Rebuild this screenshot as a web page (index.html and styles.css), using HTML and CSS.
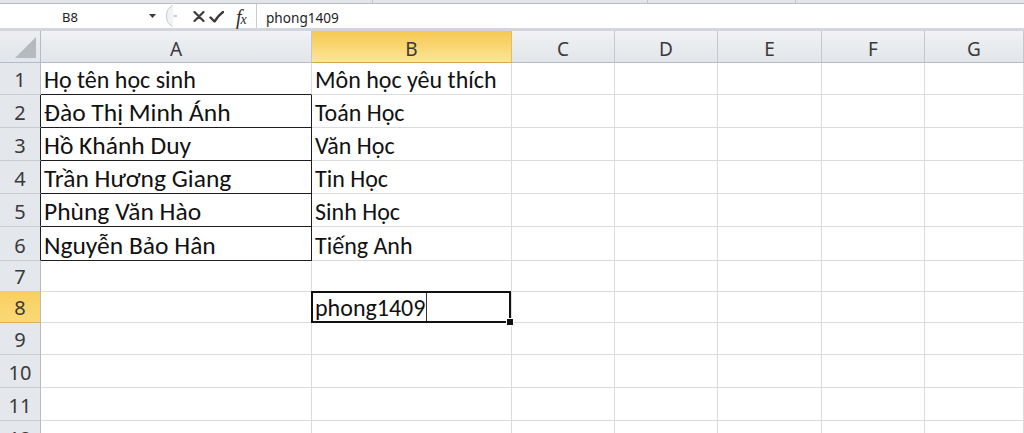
FILE: index.html
```html
<!DOCTYPE html>
<html lang="vi">
<head>
<meta charset="utf-8">
<title>Excel</title>
<link rel="stylesheet" href="styles.css">
</head>
<body>
<div class="app">
  <div class="topband">
    <span class="seg seg1"></span><span class="seg seg2"></span><span class="seg seg3"></span><span class="seg seg4"></span>
  </div>
  <div class="fbar">
    <div class="namebox">
      <span class="nb-text">B8</span>
      <svg class="nb-arrow" width="7" height="4" viewBox="0 0 7 4"><path d="M0 0H7L3.5 4Z" fill="#3a3a3a"/></svg>
    </div>
    <div class="tools">
      <svg class="grip" width="13" height="24" viewBox="0 0 13 24"><path d="M8 1.5C3.5 3 1.5 7 1.5 12S3.5 21 8 22.5" fill="#f1f2f4" stroke="#c7cbd1" stroke-width="1"/><path d="M8.5 12H12" stroke="#a9adb3" stroke-width="1.2"/></svg>
      <svg class="ic-x" width="12" height="11" viewBox="0 0 12 11"><path d="M1.5 1C4 3.5 8 7.5 10.5 10M10.5 1C8 3.5 4 7.5 1.5 10" stroke="#3d3d3d" stroke-width="2.2" stroke-linecap="round" fill="none"/></svg>
      <svg class="ic-ok" width="15" height="12" viewBox="0 0 15 12"><path d="M1.5 6.5L5.5 10.5C8 6.5 10.5 3.5 14 1" stroke="#3a3a3a" stroke-width="2.4" stroke-linecap="round" stroke-linejoin="round" fill="none"/></svg>
      <span class="fx"><i>f</i><i class="fx-x">x</i></span>
    </div>
    <div class="finput">phong1409</div>
  </div>
  <div class="sheet">
    <div class="corner"><svg width="21" height="21" viewBox="0 0 21 21"><path d="M21 0V21H0Z" fill="#b5babf"/></svg></div>
    <div class="ch">A</div><div class="ch sel">B</div><div class="ch">C</div><div class="ch">D</div><div class="ch">E</div><div class="ch">F</div><div class="ch">G</div>

    <div class="rh">1</div><div class="c bb">Họ tên học sinh</div><div class="c">Môn học yêu thích</div><div class="c"></div><div class="c"></div><div class="c"></div><div class="c"></div><div class="c"></div>

    <div class="rh dk">2</div><div class="c bx big">Đào Thị Minh Ánh</div><div class="c">Toán Học</div><div class="c"></div><div class="c"></div><div class="c"></div><div class="c"></div><div class="c"></div>

    <div class="rh dk">3</div><div class="c bx big">Hồ Khánh Duy</div><div class="c">Văn Học</div><div class="c"></div><div class="c"></div><div class="c"></div><div class="c"></div><div class="c"></div>

    <div class="rh dk">4</div><div class="c bx big">Trần Hương Giang</div><div class="c">Tin Học</div><div class="c"></div><div class="c"></div><div class="c"></div><div class="c"></div><div class="c"></div>

    <div class="rh dk">5</div><div class="c bx big">Phùng Văn Hào</div><div class="c">Sinh Học</div><div class="c"></div><div class="c"></div><div class="c"></div><div class="c"></div><div class="c"></div>

    <div class="rh dk">6</div><div class="c bx big">Nguyễn Bảo Hân</div><div class="c">Tiếng Anh</div><div class="c"></div><div class="c"></div><div class="c"></div><div class="c"></div><div class="c"></div>

    <div class="rh">7</div><div class="c"></div><div class="c"></div><div class="c"></div><div class="c"></div><div class="c"></div><div class="c"></div><div class="c"></div>

    <div class="rh sel">8</div><div class="c"></div><div class="c cur"><span>phong1409</span><span class="caret"></span></div><div class="c"></div><div class="c"></div><div class="c"></div><div class="c"></div><div class="c"></div>

    <div class="rh">9</div><div class="c"></div><div class="c"></div><div class="c"></div><div class="c"></div><div class="c"></div><div class="c"></div><div class="c"></div>

    <div class="rh">10</div><div class="c"></div><div class="c"></div><div class="c"></div><div class="c"></div><div class="c"></div><div class="c"></div><div class="c"></div>

    <div class="rh">11</div><div class="c"></div><div class="c"></div><div class="c"></div><div class="c"></div><div class="c"></div><div class="c"></div><div class="c"></div>

    <div class="rh">12</div><div class="c"></div><div class="c"></div><div class="c"></div><div class="c"></div><div class="c"></div><div class="c"></div><div class="c"></div>
  </div>
</div>
</body>
</html>
```
FILE: styles.css
```css
* { box-sizing: border-box; }

html, body {
  margin: 0;
  background: #ffffff;
  overflow: hidden;
}

body {
  font-family: "Noto Sans", "Liberation Sans", sans-serif;
  color: #222;
}

.app {
  width: 1024px;
  height: 433px;
  overflow: hidden;
}

/* thin strip left of the ribbon */
.topband {
  display: flex;
  height: 4px;
  background: #e1e4e8;
  border-bottom: 1px solid #b9bec6;
}
.seg { border-right: 1px solid #c3c8cf; height: 100%; }
.seg1 { width: 373px; }
.seg2 { width: 275px; }
.seg3 { width: 148px; }
.seg4 { flex: 1; border-right: 0; }

/* formula bar */
.fbar {
  display: flex;
  height: 27px;
  background: #ffffff;
  border-bottom: 3px solid #d2d6dc;
}

.namebox {
  width: 160px;
  display: flex;
  align-items: center;
  padding: 2px 0 0 62px;
  font-size: 13px;
  color: #222;
}
.nb-arrow { margin-left: auto; margin-right: 4px; margin-top: -2px; }

.tools {
  width: 97px;
  display: flex;
  align-items: center;
  border-right: 1px solid #c9cdd3;
}
.grip { margin-left: 5px; }
.ic-x { margin-left: 15px; margin-top: 1px; }
.ic-ok { margin-left: 4px; margin-top: 1px; }
.fx {
  margin-left: 12px;
  font-family: "Liberation Serif", serif;
  font-size: 20px;
  color: #2e2e2e;
  line-height: 1;
  margin-top: 1px;
  white-space: nowrap;
}
.fx-x { font-size: 14px; margin-left: -1px; }

.finput {
  flex: 1;
  display: flex;
  align-items: center;
  padding: 2px 0 0 9px;
  font-size: 13.6px;
  color: #1e1e1e;
}

/* sheet */
.sheet {
  display: grid;
  grid-template-columns: 41px 271px 200px 103px 103px 104px 103px 99px;
  grid-template-rows: 32px 32px 33px 33px 33px 33px 34px 31px 31px 32px 33px 33px 33px;
}

.corner {
  background: linear-gradient(#eceef1, #e2e5e9);
  border-right: 1px solid #b6bcc3;
  border-bottom: 1px solid #b6bcc3;
  display: flex;
  justify-content: flex-end;
  align-items: flex-end;
  padding: 0 4px 4px 0;
}

.ch {
  background: linear-gradient(#f0f2f5, #e2e5e9);
  border-right: 1px solid #c5c9ce;
  border-bottom: 1px solid #b6bcc3;
  display: flex;
  justify-content: center;
  align-items: flex-end;
  font-size: 19px;
  line-height: 25px;
  color: #3a3a3a;
}
.ch.sel {
  background: linear-gradient(#f7c953, #f9d56f 45%, #fde59c);
  border-bottom-color: #d9a640;
  border-right-color: #e2bb62;
}

.rh {
  background: #e4e7eb;
  border-right: 1px solid #b6bcc3;
  border-bottom: 1px solid #c9cdd2;
  display: flex;
  justify-content: center;
  align-items: flex-end;
  font-size: 20px;
  line-height: 29px;
  color: #3a3a3a;
}
.rh.dk { border-right-color: #1e1e1e; }
.rh.sel {
  background: linear-gradient(#f9cf5f, #fbd978);
  border-bottom-color: #e0b455;
}

.c {
  border-right: 1px solid #dadcdf;
  border-bottom: 1px solid #dadcdf;
  display: flex;
  align-items: flex-end;
  padding: 0 0 2px 3px;
  font-family: Carlito, "Liberation Sans", sans-serif;
  font-size: 24px;
  line-height: 25px;
  color: #111;
  white-space: nowrap;
}
.c.bb { border-bottom-color: #1e1e1e; }
.c.bx { border-right-color: #1e1e1e; border-bottom-color: #1e1e1e; }
.c.big { font-size: 25.5px; }

.cur { position: relative; }
.cur::after {
  content: "";
  position: absolute;
  left: -1px;
  top: -1px;
  right: 0;
  bottom: -1px;
  border: 2px solid #111;
}
.cur::before {
  content: "";
  position: absolute;
  right: -3px;
  bottom: -4px;
  width: 6px;
  height: 6px;
  background: #111;
  border: 1px solid #fff;
  z-index: 2;
}
.caret {
  align-self: stretch;
  width: 1px;
  margin: 1px 0 -1px 1px;
  background: #333;
}
```
